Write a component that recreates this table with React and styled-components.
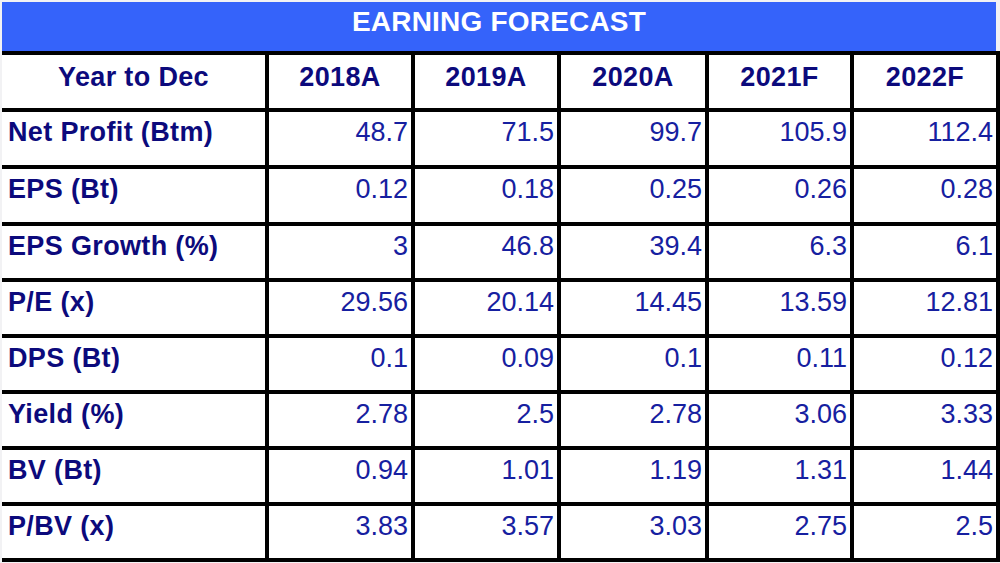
import React from "react";
import styled, { createGlobalStyle } from "styled-components";

const Global = createGlobalStyle`
  html, body { margin: 0; padding: 0; background: #f2f2f4; }
  body { width: 1000px; height: 563px; overflow: hidden; }
`;

const Page = styled.div`
  width: 1000px;
  height: 563px;
  padding: 2px 0 0 2px;
  box-sizing: border-box;
  font-family: "Liberation Sans", Arial, sans-serif;
`;

const Title = styled.div`
  height: 49px;
  margin-right: 4px;
  background: #3563fa;
  color: #ffffff;
  font-size: 28px;
  font-weight: 700;
  line-height: 28px;
  text-align: center;
  padding-top: 6px;
  box-sizing: border-box;
  letter-spacing: 0.2px;
`;

const Grid = styled.div`
  display: grid;
  grid-template-columns: 263px 142px 142px 144px 141px 142px;
  grid-template-rows: 53px 53px 53px 52px 52px 52px 52px 52px 52px;
  gap: 4px;
  padding: 4px 4px 4px 0;
  background: #000;
  width: 998px;
  box-sizing: border-box;
`;

const Cell = styled.div`
  background: #fff;
  font-size: 27px;
  line-height: 27px;
  white-space: nowrap;
  box-sizing: border-box;
  padding-top: ${(p) => (p.$head ? "9px" : "7px")};
  padding-left: ${(p) => (p.$align === "left" ? "6px" : "0")};
  padding-right: ${(p) => (p.$align === "right" ? "3px" : "0")};
  text-align: ${(p) => p.$align};
  font-weight: ${(p) => (p.$bold ? 700 : 400)};
  letter-spacing: ${(p) => (p.$bold ? "0.35px" : "0")};
  color: ${(p) => (p.$bold ? "#0c0a7c" : "#1620a0")};
`;

const years = ["2018A", "2019A", "2020A", "2021F", "2022F"];

const rows = [
  ["Net Profit (Btm)", "48.7", "71.5", "99.7", "105.9", "112.4"],
  ["EPS (Bt)", "0.12", "0.18", "0.25", "0.26", "0.28"],
  ["EPS Growth (%)", "3", "46.8", "39.4", "6.3", "6.1"],
  ["P/E (x)", "29.56", "20.14", "14.45", "13.59", "12.81"],
  ["DPS (Bt)", "0.1", "0.09", "0.1", "0.11", "0.12"],
  ["Yield (%)", "2.78", "2.5", "2.78", "3.06", "3.33"],
  ["BV (Bt)", "0.94", "1.01", "1.19", "1.31", "1.44"],
  ["P/BV (x)", "3.83", "3.57", "3.03", "2.75", "2.5"],
];

export default function App() {
  return (
    <>
      <Global />
      <Page>
        <Title>EARNING FORECAST</Title>
        <Grid>
          <Cell $head $bold $align="center">Year to Dec</Cell>
          {years.map((y) => (
            <Cell key={y} $head $bold $align="center">{y}</Cell>
          ))}
          {rows.map((r) => (
            <React.Fragment key={r[0]}>
              <Cell $bold $align="left">{r[0]}</Cell>
              {r.slice(1).map((v, i) => (
                <Cell key={i} $align="right">{v}</Cell>
              ))}
            </React.Fragment>
          ))}
        </Grid>
      </Page>
    </>
  );
}
